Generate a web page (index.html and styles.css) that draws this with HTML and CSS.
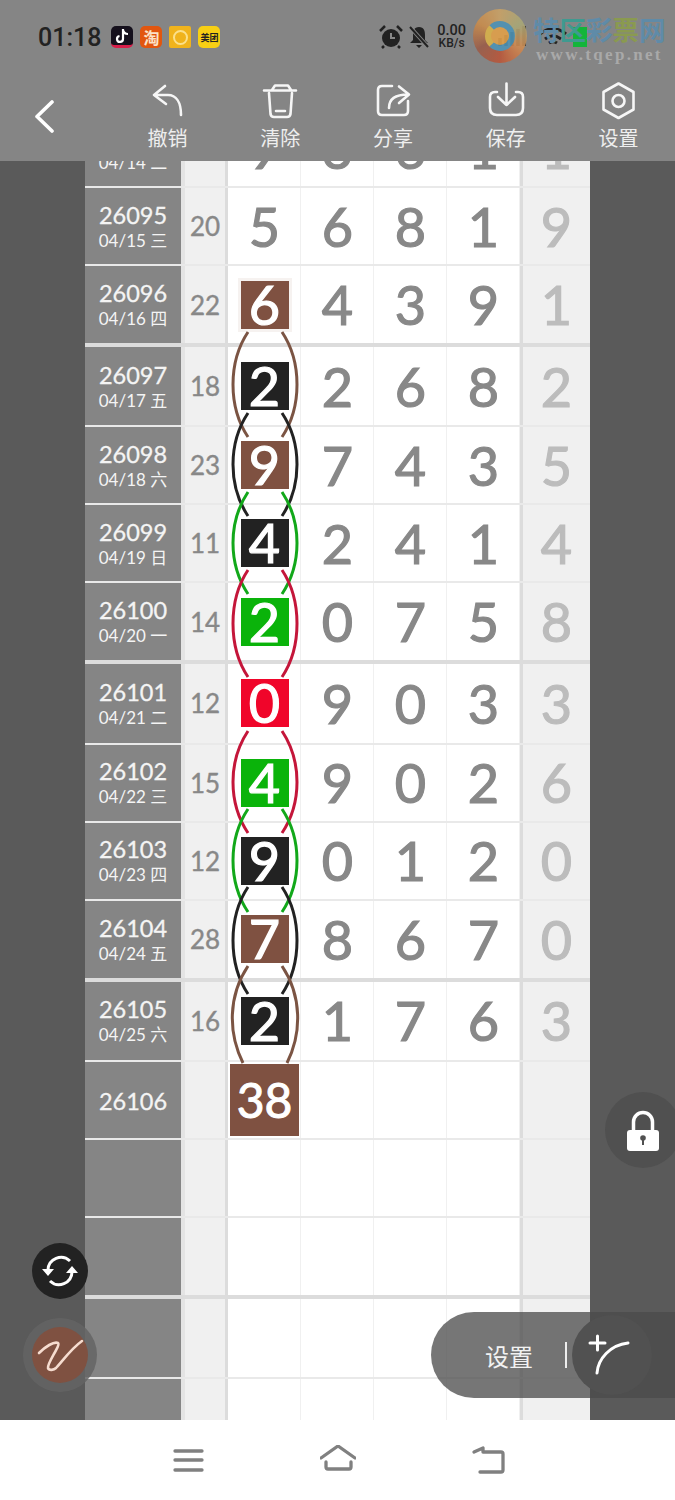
FILE: index.html

```html
<!DOCTYPE html>
<html>
<head>
  <meta charset="utf-8" />
  <meta name="viewport" content="width=device-width, initial-scale=1" />
  <title>走势图</title>
  <link rel="stylesheet" href="styles.css">
</head>
<body>
  <div class="header">
    <div class="status">
      <span class="time">01:18</span>
      <div class="apps">
        <span class="app tiktok">
          <svg width="14" height="16" viewBox="0 0 14 16"><path d="M8 1V11A3 3 0 1 1 4.500 8M8 2C8.500 4.500 10 6 13 6" fill="none" stroke="#fff" stroke-width="2.200"/></svg>
        </span>
        <span class="app taobao">淘</span>
        <span class="app sun"><span class="sun-dot"></span></span>
        <span class="app meituan">美团</span>
      </div>
      <div class="sys">
        <svg width="24" height="24" viewBox="0 0 24 24"><circle cx="12" cy="13" r="9" fill="#222"/><path d="M12 8V13H16" fill="none" stroke="#888" stroke-width="2"/><path d="M1 6L6 1M23 6L18 1M5 21L3 23M19 21L21 23" stroke="#222" stroke-width="2.500"/></svg>
        <svg width="22" height="24" viewBox="0 0 22 24"><path d="M11 2C6 2 5 6 5 10V15L2 18H20L17 15V10C17 6 16 2 11 2ZM8 20H14L11 23Z" fill="#222"/><path d="M2 2L20 22" stroke="#888" stroke-width="4"/><path d="M2 2L20 22" stroke="#222" stroke-width="2"/></svg>
        <div class="speed"><span>0.00</span><span class="speed-unit">KB/s</span></div>
        <svg class="sys-signal" width="32" height="22" viewBox="0 0 32 22"><path d="M2 20V12M8 20V9M14 20V6M20 20V3M26 20V0" stroke="#222" stroke-width="3.500"/></svg>
        <svg width="30" height="22" viewBox="0 0 30 22"><path d="M2 8C10 1 20 1 28 8M7 13C12 9 18 9 23 13M11 17C14 15 16 15 19 17" fill="none" stroke="#222" stroke-width="3"/></svg>
        <span class="sys-batt"></span>
      </div>
    </div>
    <div class="toolbar">
      <div class="back">
        <svg width="20" height="34" viewBox="0 0 20 34"><path d="M17 2L2 16.500L17 31" fill="none" stroke="#fff" stroke-width="3.600" stroke-linecap="round" stroke-linejoin="round"/></svg>
      </div>
      <div class="tool">
        <svg width="40" height="38" viewBox="0 0 40 38"><path d="M18 4L7 13L19 22M7 13H21C29 13 34 20 34 33" class="ico"/></svg>
        <span>撤销</span>
      </div>
      <div class="tool">
        <svg width="40" height="38" viewBox="0 0 40 38"><path d="M4 8.500H36M12 8L15 3.500H28L31 8M9 11L10.500 32Q11 35 14 35H27Q30 35 30.500 32L32 11M16 29H25" class="ico"/></svg>
        <span>清除</span>
      </div>
      <div class="tool">
        <svg width="40" height="38" viewBox="0 0 40 38"><path d="M19 4H9Q5 4 5 8V29Q5 33 9 33H31Q35 33 35 29V19M16 26C16 17 22 12.500 35 12.500M26 4.500L36 12.500L26 21" class="ico"/></svg>
        <span>分享</span>
      </div>
      <div class="tool">
        <svg width="40" height="38" viewBox="0 0 40 38"><path d="M11 10H9Q4 10 4 15V26Q4 33 11 33H30Q37 33 37 26V15Q37 10 32 10H30M20.500 1.500V23M12 15L20.500 23L29 15" class="ico"/></svg>
        <span>保存</span>
      </div>
      <div class="tool">
        <svg width="40" height="38" viewBox="0 0 40 38"><path d="M19.500 1.500L34.500 10V27.500L19.500 36L4.500 27.500V10Z" class="ico"/><circle cx="19.500" cy="19" r="6" class="ico"/></svg>
        <span>设置</span>
      </div>
    </div>
  </div>

  <div class="watermark">
    <div class="wm-logo"><div class="wm-swirl"></div></div>
    <div class="wm-text">
      <div class="wm-name"><span class="wm-blue">特</span><span class="wm-teal">区</span><span class="wm-blue">彩</span><span class="wm-olive">票</span><span class="wm-blue">网</span></div>
      <div class="wm-url">www.tqep.net</div>
    </div>
  </div>

  <div class="main">
    <div class="sheet">
      <div class="row">
        <div class="lbl"><div class="no">&nbsp;</div><div class="date">04/14 二</div></div>
        <div class="sum"></div>
        <div class="cell">9</div><div class="cell">3</div><div class="cell">6</div><div class="cell">1</div>
        <div class="miss">1</div>
      </div>
      <div class="row">
        <div class="lbl"><div class="no">26095</div><div class="date">04/15 三</div></div>
        <div class="sum">20</div>
        <div class="cell">5</div><div class="cell">6</div><div class="cell">8</div><div class="cell">1</div>
        <div class="miss">9</div>
      </div>
      <div class="row row-last">
        <div class="lbl"><div class="no">26096</div><div class="date">04/16 四</div></div>
        <div class="sum">22</div>
        <div class="cell"><span class="box brown picked">6</span></div><div class="cell">4</div><div class="cell">3</div><div class="cell">9</div>
        <div class="miss">1</div>
      </div>

      <div class="row row-first">
        <div class="lbl"><div class="no">26097</div><div class="date">04/17 五</div></div>
        <div class="sum">18</div>
        <div class="cell"><span class="box black">2</span></div><div class="cell">2</div><div class="cell">6</div><div class="cell">8</div>
        <div class="miss">2</div>
      </div>
      <div class="row">
        <div class="lbl"><div class="no">26098</div><div class="date">04/18 六</div></div>
        <div class="sum">23</div>
        <div class="cell"><span class="box brown">9</span></div><div class="cell">7</div><div class="cell">4</div><div class="cell">3</div>
        <div class="miss">5</div>
      </div>
      <div class="row">
        <div class="lbl"><div class="no">26099</div><div class="date">04/19 日</div></div>
        <div class="sum">11</div>
        <div class="cell"><span class="box black">4</span></div><div class="cell">2</div><div class="cell">4</div><div class="cell">1</div>
        <div class="miss">4</div>
      </div>
      <div class="row row-last">
        <div class="lbl"><div class="no">26100</div><div class="date">04/20 一</div></div>
        <div class="sum">14</div>
        <div class="cell"><span class="box green">2</span></div><div class="cell">0</div><div class="cell">7</div><div class="cell">5</div>
        <div class="miss">8</div>
      </div>

      <div class="row row-first">
        <div class="lbl"><div class="no">26101</div><div class="date">04/21 二</div></div>
        <div class="sum">12</div>
        <div class="cell"><span class="box red">0</span></div><div class="cell">9</div><div class="cell">0</div><div class="cell">3</div>
        <div class="miss">3</div>
      </div>
      <div class="row">
        <div class="lbl"><div class="no">26102</div><div class="date">04/22 三</div></div>
        <div class="sum">15</div>
        <div class="cell"><span class="box green">4</span></div><div class="cell">9</div><div class="cell">0</div><div class="cell">2</div>
        <div class="miss">6</div>
      </div>
      <div class="row">
        <div class="lbl"><div class="no">26103</div><div class="date">04/23 四</div></div>
        <div class="sum">12</div>
        <div class="cell"><span class="box black">9</span></div><div class="cell">0</div><div class="cell">1</div><div class="cell">2</div>
        <div class="miss">0</div>
      </div>
      <div class="row row-last">
        <div class="lbl"><div class="no">26104</div><div class="date">04/24 五</div></div>
        <div class="sum">28</div>
        <div class="cell"><span class="box brown">7</span></div><div class="cell">8</div><div class="cell">6</div><div class="cell">7</div>
        <div class="miss">0</div>
      </div>

      <div class="row row-first">
        <div class="lbl"><div class="no">26105</div><div class="date">04/25 六</div></div>
        <div class="sum">16</div>
        <div class="cell"><span class="box black">2</span></div><div class="cell">1</div><div class="cell">7</div><div class="cell">6</div>
        <div class="miss">3</div>
      </div>
      <div class="row">
        <div class="lbl"><div class="no">26106</div></div>
        <div class="sum"></div>
        <div class="cell"><span class="box-big">38</span></div><div class="cell"></div><div class="cell"></div><div class="cell"></div>
        <div class="miss"></div>
      </div>
      <div class="row">
        <div class="lbl"></div><div class="sum"></div>
        <div class="cell"></div><div class="cell"></div><div class="cell"></div><div class="cell"></div>
        <div class="miss"></div>
      </div>
      <div class="row row-last">
        <div class="lbl"></div><div class="sum"></div>
        <div class="cell"></div><div class="cell"></div><div class="cell"></div><div class="cell"></div>
        <div class="miss"></div>
      </div>

      <div class="row row-first">
        <div class="lbl"></div><div class="sum"></div>
        <div class="cell"></div><div class="cell"></div><div class="cell"></div><div class="cell"></div>
        <div class="miss"></div>
      </div>
      <div class="row">
        <div class="lbl"></div><div class="sum"></div>
        <div class="cell"></div><div class="cell"></div><div class="cell"></div><div class="cell"></div>
        <div class="miss"></div>
      </div>
    </div>

    <!-- arcs drawn in page coordinates, left and right of every skipped box -->
    <svg class="arcs" width="505" height="1259" viewBox="85 161 505 1259" fill="none" stroke-width="3">
      <g stroke="#7b5443">
        <path d="M248 332C228 362 228 407 248 437"/><path d="M282 332C302 362 302 407 282 437"/>
      </g>
      <g stroke="#222">
        <path d="M248 413C228 443 228 486 248 516"/><path d="M282 413C302 443 302 486 282 516"/>
      </g>
      <g stroke="#12a81a">
        <path d="M248 492C228 522 228 564 248 594"/><path d="M282 492C302 522 302 564 282 594"/>
      </g>
      <g stroke="#c4163a">
        <path d="M248 570C228 600 228 647 248 677"/><path d="M282 570C302 600 302 647 282 677"/>
        <path d="M248 731C228 761 228 803 248 833"/><path d="M282 731C302 761 302 803 282 833"/>
      </g>
      <g stroke="#12a81a">
        <path d="M248 809C228 839 228 882 248 912"/><path d="M282 809C302 839 302 882 282 912"/>
      </g>
      <g stroke="#222">
        <path d="M248 887C228 917 228 964 248 994"/><path d="M282 887C302 917 302 964 282 994"/>
      </g>
      <g stroke="#7b5443">
        <path d="M248 966C228 996 228 1033 243 1063"/><path d="M282 966C302 996 302 1033 287 1063"/>
      </g>
    </svg>

    <div class="fab fab-sync">
      <svg width="56" height="56" viewBox="0 0 56 56">
        <path d="M38 18A13 13 0 0 0 16 27M18 38A13 13 0 0 0 40 29" fill="none" stroke="#fff" stroke-width="3"/>
        <path d="M10 26H22L16 33ZM34 30H46L40 23Z" fill="#fff"/>
      </svg>
    </div>
    <div class="fab-pen">
      <div class="fab fab-pen-inner">
        <svg width="56" height="56" viewBox="0 0 56 56"><path d="M7 26C13 20 22 14 26 16C29 18 15 36 16 41C17 44 22 43 24 41C32 32 40 21 50 14" fill="none" stroke="#f6dccf" stroke-width="2.600" stroke-linecap="round"/></svg>
      </div>
    </div>
    <div class="fab-lock">
      <svg width="76" height="76" viewBox="0 0 76 76">
        <path d="M28.500 38V30A9.500 9.500 0 0 1 47.500 30V38" fill="none" stroke="#fff" stroke-width="3.500"/>
        <rect x="22" y="38" width="32" height="21" rx="3" fill="#fff"/>
        <circle cx="38" cy="46" r="2.800" fill="#505050"/>
        <rect x="37" y="47" width="2" height="6" fill="#505050"/>
      </svg>
    </div>
    <div class="pill">
      <span class="pill-text">设置</span>
      <span class="pill-line"></span>
      <div class="pill-tool">
        <svg width="80" height="80" viewBox="0 0 80 80"><path d="M18 28H33M25.500 21V35M25 58C26 44 38 30 56 28" fill="none" stroke="#fff" stroke-width="3" stroke-linecap="round"/></svg>
      </div>
    </div>
  </div>

  <div class="nav">
    <svg width="36" height="30" viewBox="0 0 36 30"><path d="M5 6H32M5 15H32M5 25H32" class="nav-ico"/></svg>
    <svg width="36" height="30" viewBox="0 0 36 30"><path d="M1 13L18 1L35 13M6 17V22Q6 24 8 24H29Q31 24 31 22V17" class="nav-ico"/></svg>
    <svg width="36" height="30" viewBox="0 0 36 30"><path d="M4 7L13 3V7H31Q33 7 33 9V25Q33 27 31 27H10" class="nav-ico"/></svg>
  </div>
</body>
</html>
```

FILE: styles.css

```css
body {
  margin: 0;
  height: 1500px;
  overflow: hidden;
  display: flex;
  flex-direction: column;
  position: relative;
  font-family: "Lato", "Noto Sans CJK SC", sans-serif;
  background: #fff;
}

/* top bars */
.header {
  height: 161px;
  flex: none;
  background: #858585;
  position: relative;
  z-index: 2;
}
.status {
  height: 74px;
  display: flex;
  align-items: center;
  padding-left: 38px;
  padding-right: 88px;
}
.time {
  font-family: "Roboto", sans-serif;
  font-size: 25px;
  font-weight: 500;
  color: #222;
}
.apps {
  display: flex;
  gap: 7px;
  margin-left: 10px;
}
.app {
  width: 22px;
  height: 22px;
  border-radius: 5px;
  display: flex;
  align-items: center;
  justify-content: center;
  font-family: "Noto Sans CJK SC", sans-serif;
  font-weight: 700;
  overflow: hidden;
}
.tiktok {
  background: #15101c;
  border-bottom: 3px solid #d81e4a;
  box-sizing: border-box;
}
.taobao {
  background: #e2560f;
  color: #fbe3c8;
  font-size: 16px;
}
.sun {
  background: #f0b31c;
  border-radius: 2px;
}
.sun-dot {
  width: 11px;
  height: 11px;
  border-radius: 50%;
  border: 2px solid #fbe08a;
}
.meituan {
  background: #f7cf14;
  color: #222;
  font-size: 9px;
}
.sys {
  margin-left: auto;
  display: flex;
  align-items: center;
  gap: 5px;
}
.speed {
  display: flex;
  flex-direction: column;
  align-items: center;
  margin: 0 8px 0 2px;
  font-family: "Roboto", sans-serif;
  font-size: 14.500px;
  font-weight: 500;
  line-height: 13px;
  color: #222;
}
.speed-unit {
  font-size: 12px;
}
.sys-signal {
  margin-left: 19px;
  margin-right: 3px;
}
.sys-batt {
  width: 14px;
  height: 20px;
  background: #13b53a;
}
.toolbar {
  display: flex;
  height: 87px;
  padding-top: 8px;
  box-sizing: border-box;
}
.back {
  width: 111px;
  flex: none;
  padding: 18px 0 0 35px;
  box-sizing: border-box;
}
.tool {
  flex: 1;
  display: flex;
  flex-direction: column;
  align-items: center;
  font-size: 20px;
  line-height: 28px;
  color: #eee;
}
.tool svg {
  margin-bottom: 4px;
}
.ico {
  fill: none;
  stroke: #f6f6f6;
  stroke-width: 2.600;
  stroke-linecap: round;
  stroke-linejoin: round;
}

/* watermark over the status bar */
.watermark {
  position: absolute;
  left: 473px;
  top: 9px;
  display: flex;
  gap: 6px;
  z-index: 3;
}
.wm-logo {
  width: 54px;
  height: 54px;
  border-radius: 50%;
  background: conic-gradient(#c9a267, #a8a878, #d08a50, #b9563a, #9a5d4a, #c98c4c, #c9a267);
  opacity: 0.9;
  display: flex;
  align-items: center;
  justify-content: center;
}
.wm-swirl {
  width: 30px;
  height: 30px;
  border-radius: 50%;
  border: 6px solid #4e93b5;
  border-left-color: #d9b24a;
  background: #e0a04a;
  box-sizing: border-box;
}
.wm-name {
  font-family: "Noto Sans CJK SC", sans-serif;
  font-size: 26.500px;
  font-weight: 700;
  line-height: 34px;
  margin-top: 3px;
  white-space: nowrap;
}
.wm-blue {
  color: #5f8ba8;
}
.wm-teal {
  color: #3f9a90;
}
.wm-olive {
  color: #8a9a50;
}
.wm-url {
  font-family: "Liberation Serif", serif;
  font-size: 17px;
  font-weight: 700;
  line-height: 18px;
  letter-spacing: 2.300px;
  color: #a9a9a9;
  margin-left: 3px;
}

/* chart */
.main {
  flex: 1;
  min-height: 0;
  position: relative;
  overflow: hidden;
  background: #5a5a5a;
  padding: 0 85px;
}
.sheet {
  margin-top: -51px;
}
.row {
  height: 78px;
  display: grid;
  grid-template-columns: 96px 47px 73px 73px 73px 73px 70px;
  border-bottom: 2px solid #e9e9e9;
  box-sizing: border-box;
}
.row-first {
  height: 80.330px;
}
.row-last {
  height: 81px;
  border-bottom: 4px solid #dcdcdc;
}
.lbl {
  background: #858585;
  color: #f4f4f4;
  display: flex;
  flex-direction: column;
  align-items: center;
  justify-content: center;
  padding-top: 3px;
  box-sizing: border-box;
}
.no {
  font-size: 23.500px;
  line-height: 26px;
  -webkit-text-stroke: 0.3px;
}
.date {
  font-size: 17px;
  line-height: 26px;
}
.sum {
  background: #f0f0f0;
  border-left: 4px solid #e4e4e4;
  border-right: 3px solid #dcdcdc;
  color: #888;
  font-size: 26px;
  -webkit-text-stroke: 0.4px;
  display: flex;
  align-items: center;
  justify-content: center;
}
.cell {
  background: #fff;
  box-shadow: inset -1px 0 0 #f0f0f0;
  color: #888;
  font-size: 54px;
  -webkit-text-stroke: 1.200px;
  display: flex;
  align-items: center;
  justify-content: center;
}
.miss {
  background: #f0f0f0;
  border-left: 3px solid #dcdcdc;
  color: #bcbcbc;
  font-size: 54px;
  -webkit-text-stroke: 1.200px;
  display: flex;
  align-items: center;
  justify-content: center;
}
.box {
  width: 48px;
  height: 48px;
  color: #fff;
  display: flex;
  align-items: center;
  justify-content: center;
  line-height: 48px;
}
.box-big {
  width: 69px;
  height: 72px;
  background: #7f5141;
  color: #fff;
  font-size: 48px;
  -webkit-text-stroke: 1px;
  display: flex;
  align-items: center;
  justify-content: center;
}
.brown {
  background: #7f5141;
}
.black {
  background: #222;
}
.green {
  background: #0ab30a;
}
.red {
  background: #f0052a;
}
.picked {
  box-shadow: 0 0 0 3px #f6f2f0;
}
.arcs {
  position: absolute;
  left: 85px;
  top: 0;
}

/* floating buttons */
.fab {
  width: 56px;
  height: 56px;
  border-radius: 50%;
}
.fab-sync {
  position: absolute;
  left: 32px;
  top: 1082px;
  background: #222;
}
.fab-pen {
  position: absolute;
  left: 23px;
  top: 1157px;
  width: 74px;
  height: 74px;
  border-radius: 50%;
  background: rgba(100, 100, 100, 0.85);
  display: flex;
  align-items: center;
  justify-content: center;
}
.fab-pen-inner {
  background: #7f5141;
}
.fab-lock {
  position: absolute;
  left: 605px;
  top: 931px;
  width: 76px;
  height: 76px;
  border-radius: 50%;
  background: #505050;
}
.pill {
  position: absolute;
  left: 431px;
  right: 0;
  bottom: 22px;
  height: 86px;
  border-radius: 43px 0 0 43px;
  background: rgba(75, 75, 75, 0.76);
  display: flex;
  align-items: center;
  padding-left: 54px;
}
.pill-text {
  font-size: 24px;
  color: #f2f2f2;
}
.pill-line {
  width: 2px;
  height: 26px;
  background: #eee;
  margin-left: 32px;
}
.pill-tool {
  width: 80px;
  height: 80px;
  border-radius: 50%;
  background: #515151;
  margin-left: 5px;
}

/* bottom nav */
.nav {
  height: 80px;
  flex: none;
  background: #fff;
  display: flex;
  align-items: center;
  justify-content: center;
  gap: 114px;
}
.nav-ico {
  fill: none;
  stroke: #808080;
  stroke-width: 3.300;
  stroke-linecap: round;
  stroke-linejoin: round;
}
```
